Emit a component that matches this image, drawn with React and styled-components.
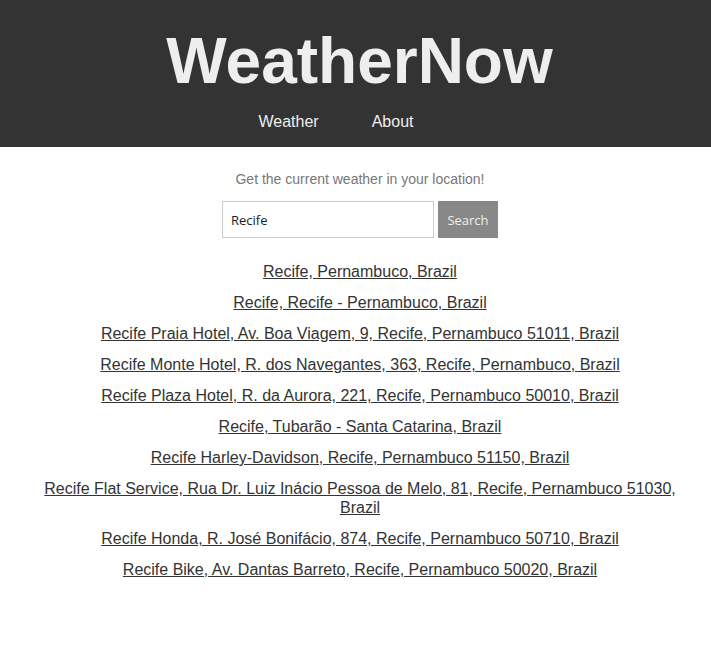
import React, { useState } from 'react'
import styled, { createGlobalStyle } from 'styled-components'

const GlobalStyle = createGlobalStyle`
  body {
    margin: 0;
    background: #fff;
    font-family: "Liberation Sans", Arial, sans-serif;
  }
`

const results = [
  'Recife, Pernambuco, Brazil',
  'Recife, Recife - Pernambuco, Brazil',
  'Recife Praia Hotel, Av. Boa Viagem, 9, Recife, Pernambuco 51011, Brazil',
  'Recife Monte Hotel, R. dos Navegantes, 363, Recife, Pernambuco, Brazil',
  'Recife Plaza Hotel, R. da Aurora, 221, Recife, Pernambuco 50010, Brazil',
  'Recife, Tubarão - Santa Catarina, Brazil',
  'Recife Harley-Davidson, Recife, Pernambuco 51150, Brazil',
  'Recife Flat Service, Rua Dr. Luiz Inácio Pessoa de Melo, 81, Recife, Pernambuco 51030, Brazil',
  'Recife Honda, R. José Bonifácio, 874, Recife, Pernambuco 50710, Brazil',
  'Recife Bike, Av. Dantas Barreto, Recife, Pernambuco 50020, Brazil',
]

const App = () => {
  const [query, setQuery] = useState('Recife')

  return (
    <>
      <GlobalStyle />
      <Header>
        <Title>WeatherNow</Title>
        <Nav>
          <NavLink href="#">Weather</NavLink>
          <NavLink href="#">About</NavLink>
        </Nav>
      </Header>
      <Main>
        <Subtitle>Get the current weather in your location!</Subtitle>
        <SearchForm onSubmit={(e) => e.preventDefault()}>
          <SearchInput value={query} onChange={(e) => setQuery(e.target.value)} />
          <SearchButton type="submit">Search</SearchButton>
        </SearchForm>
        <ResultList>
          {results.map((r) => (
            <ResultItem key={r}>
              <ResultLink href="#">{r}</ResultLink>
            </ResultItem>
          ))}
        </ResultList>
      </Main>
    </>
  )
}

const Header = styled.header`
  background-color: #333;
  color: #eee;
  padding: 24px 0 16px 8px;
  text-align: center;
`

const Title = styled.h1`
  margin: 0;
  font-size: 64px;
  font-weight: bold;
  line-height: 74px;
  color: #eee;
`

const Nav = styled.nav`
  display: flex;
  justify-content: center;
  gap: 53px;
  margin-top: 15px;
  padding-right: 47px;
`

const NavLink = styled.a`
  color: #eee;
  text-decoration: none;
  font-size: 16px;
  line-height: 18px;
`

const Main = styled.main`
  padding: 24px 15px 40px 24px;
  text-align: center;
`

const Subtitle = styled.p`
  margin: 0;
  font-size: 14px;
  line-height: 16px;
  color: #777;
`

const SearchForm = styled.form`
  display: flex;
  justify-content: center;
  gap: 4px;
  margin-top: 14px;
`

const SearchInput = styled.input`
  box-sizing: border-box;
  width: 212px;
  height: 37px;
  border: 1px solid #ccc;
  padding: 0 8px;
  font-family: "Open Sans", sans-serif;
  font-size: 13px;
  color: #222;
  outline: none;
`

const SearchButton = styled.button`
  box-sizing: border-box;
  width: 60px;
  height: 37px;
  border: none;
  background-color: #888;
  color: #eee;
  font-family: "Open Sans", sans-serif;
  font-size: 13px;
  padding: 0;
  cursor: pointer;
`

const ResultList = styled.div`
  display: flex;
  flex-direction: column;
  gap: 12px;
  margin-top: 24px;
`

const ResultItem = styled.p`
  margin: 0;
  font-size: 16px;
  line-height: 19px;
`

const ResultLink = styled.a`
  color: #333;
  text-decoration: underline;
`

export default App
